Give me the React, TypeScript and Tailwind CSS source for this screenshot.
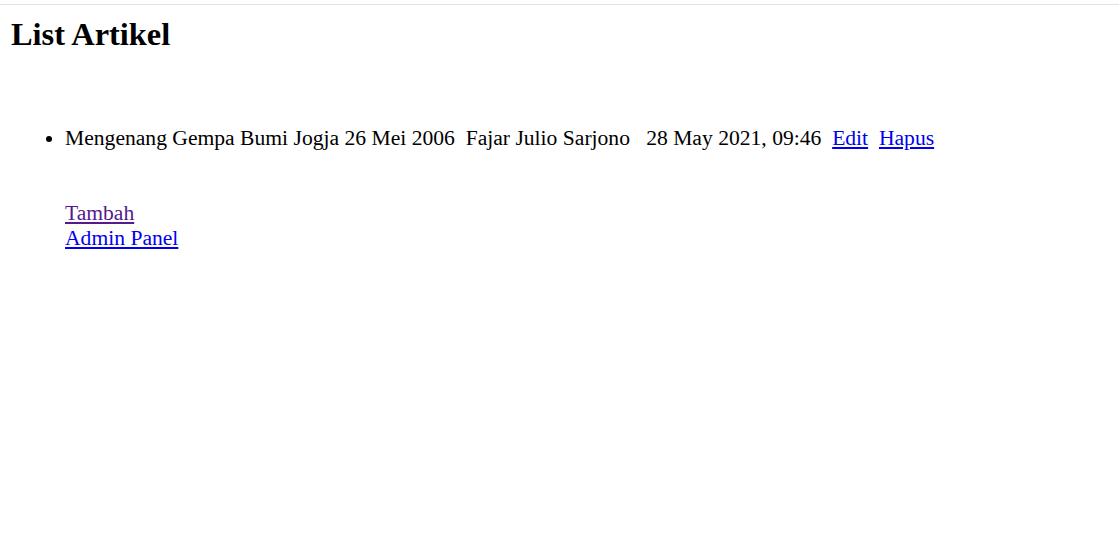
export default function App() {
  return (
    <div className="min-h-screen bg-white font-['Liberation_Serif',serif] text-[21.6px] leading-[1.15] text-black">
      <div className="h-[4px]" />
      <div className="h-px bg-[#e2e2e2]" />
      <main className="px-[11px]">
        <h2 className="pt-[11px] text-[32.4px] font-bold leading-[1.15]">List Artikel</h2>
        <ul className="mt-[73px] list-disc pl-[54px]">
          <li>
            Mengenang Gempa Bumi Jogja 26 Mei 2006{"\u00a0 "}Fajar Julio Sarjono{"\u00a0 \u00a0"}28 May 2021, 09:46{"\u00a0 "}
            <a href="#" className="text-[#0000ee] underline">Edit</a>
            {"\u00a0 "}
            <a href="#" className="text-[#0000ee] underline">Hapus</a>
          </li>
        </ul>
        <div className="mt-[50px] pl-[54px]">
          <a href="#" className="text-[#551a8b] underline">Tambah</a>
          <br />
          <a href="#" className="text-[#0000ee] underline">Admin Panel</a>
        </div>
      </main>
    </div>
  )
}
